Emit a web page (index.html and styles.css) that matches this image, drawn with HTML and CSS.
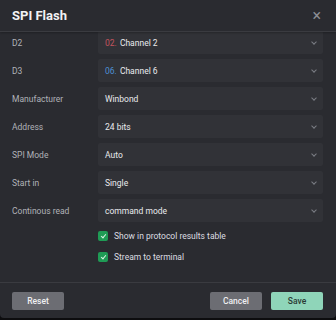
FILE: index.html
```html
<!DOCTYPE html>
<html lang="en">
<head>
    <meta charset="UTF-8">
    <meta name="viewport" content="width=device-width, initial-scale=1.0">
    <title>SPI Flash</title>
    <link rel="stylesheet" href="styles.css">
</head>
<body>
    <div class="modal">
        <header class="modal-header">
            <h1>SPI Flash</h1>
            <span class="close">&times;</span>
        </header>

        <div class="modal-body">
            <div class="form">
                <div class="row">
                    <label>D2</label>
                    <div class="select"><span><span class="ch red">02.</span> Channel 2</span><i class="chev"></i></div>
                </div>
                <div class="row">
                    <label>D3</label>
                    <div class="select"><span><span class="ch blue">06.</span> Channel 6</span><i class="chev"></i></div>
                </div>
                <div class="row">
                    <label>Manufacturer</label>
                    <div class="select"><span>Winbond</span><i class="chev"></i></div>
                </div>
                <div class="row">
                    <label>Address</label>
                    <div class="select"><span>24 bits</span><i class="chev"></i></div>
                </div>
                <div class="row">
                    <label>SPI Mode</label>
                    <div class="select"><span>Auto</span><i class="chev"></i></div>
                </div>
                <div class="row">
                    <label>Start in</label>
                    <div class="select"><span>Single</span><i class="chev"></i></div>
                </div>
                <div class="row">
                    <label>Continous read</label>
                    <div class="select"><span>command mode</span><i class="chev"></i></div>
                </div>

                <div class="checks">
                    <div class="check"><span class="box"></span>Show in protocol results table</div>
                    <div class="check"><span class="box"></span>Stream to terminal</div>
                </div>
            </div>
        </div>

        <footer class="modal-footer">
            <button class="btn grey">Reset</button>
            <div class="right">
                <button class="btn grey">Cancel</button>
                <button class="btn mint">Save</button>
            </div>
        </footer>
    </div>
</body>
</html>
```

FILE: styles.css
```css
body {
    margin: 0;
    background: #0d0d0f;
    font-family: Roboto, 'Liberation Sans', sans-serif;
    color: #e6e7ea;
}

.modal {
    width: 336px;
    height: 318px;
    background: #2a2b30;
    border-radius: 0 0 4px 4px;
    display: flex;
    flex-direction: column;
    overflow: hidden;
}

.modal-header {
    height: 32px;
    flex: none;
    display: flex;
    align-items: center;
    justify-content: space-between;
    padding: 0 13px 0 12px;
    border-bottom: 1px solid #3a3b40;
    box-sizing: border-box;
    box-shadow: 0 1px 2px rgba(0, 0, 0, 0.25);
    position: relative;
    z-index: 1;
}

.modal-header h1 {
    margin: 0;
    font-size: 13px;
    font-weight: 700;
    color: #f2f2f4;
}

.close {
    font-size: 16px;
    color: #8c8e94;
    line-height: 1;
    margin-right: 2px;
}

.modal-body {
    flex: 1;
    overflow: hidden;
}

.form {
    margin-top: -1px; /* scrolled a little */
    padding: 0 13px 0 12px;
}

.row {
    display: flex;
    align-items: center;
    height: 23px;
    margin-bottom: 5px;
}

.row label {
    width: 86px;
    flex: none;
    font-size: 8.5px;
    color: #b0b2b8;
}

.select {
    flex: 1;
    height: 23px;
    background: #313237;
    border-radius: 2px;
    display: flex;
    align-items: center;
    justify-content: space-between;
    padding: 0 7px;
    font-size: 8.5px;
    color: #e9eaed;
}

.ch {
    margin-right: 1px;
}

.red {
    color: #c4545e;
}

.blue {
    color: #4d8fd3;
}

.chev {
    width: 3px;
    height: 3px;
    border-right: 1px solid #7b7d84;
    border-bottom: 1px solid #7b7d84;
    transform: rotate(45deg);
    margin-top: -2px;
}

.checks {
    margin-top: -2px;
    padding-left: 86px;
}

.check {
    display: flex;
    align-items: center;
    height: 21px;
    font-size: 8.5px;
    color: #dcdde0;
}

.box {
    width: 10px;
    height: 10px;
    border-radius: 2px;
    background: #1f9b55;
    margin-right: 6px;
    position: relative;
}

.box::after {
    content: "";
    position: absolute;
    left: 3.5px;
    top: 2px;
    width: 2px;
    height: 4px;
    border-right: 1px solid #d7f2e2;
    border-bottom: 1px solid #d7f2e2;
    transform: rotate(40deg);
}

.modal-footer {
    flex: none;
    border-top: 1px solid #3a3b40;
    display: flex;
    justify-content: space-between;
    padding: 9px 13px 8px 12px;
}

.right {
    display: flex;
    gap: 9px;
}

.btn {
    width: 52px;
    height: 18px;
    border: none;
    border-radius: 2px;
    font-family: Roboto, 'Liberation Sans', sans-serif;
    font-size: 8.5px;
    font-weight: 500;
    padding: 0;
}

.grey {
    background: #6c6d73;
    color: #f0f0f2;
}

.mint {
    background: #8fd5b9;
    color: #2a3a33;
}
```
